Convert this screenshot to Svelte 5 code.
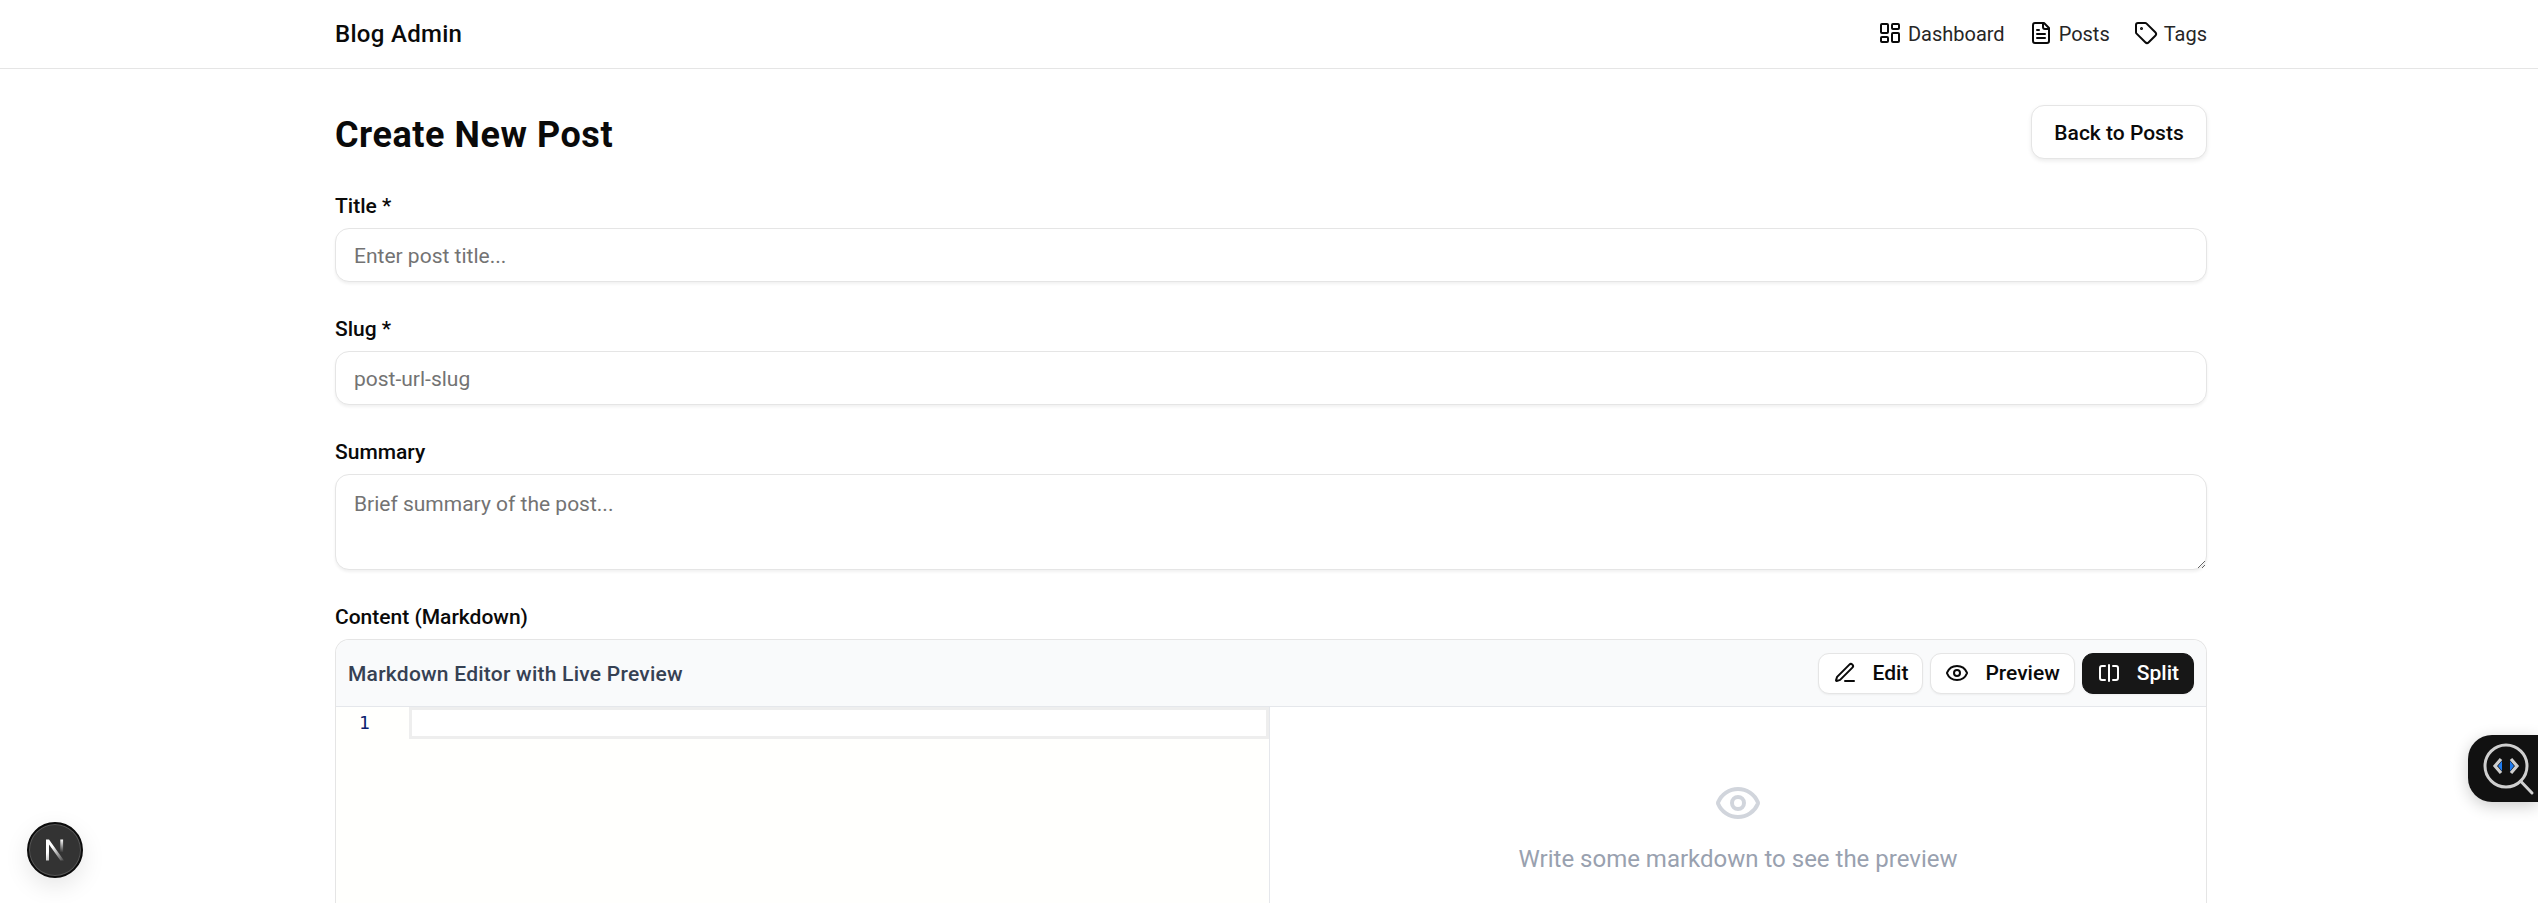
<script>
    let title = $state("");
    let slug = $state("");
    let summary = $state("");
    let mode = $state("split");

    const navLinks = [
        { label: "Dashboard", icon: "dash" },
        { label: "Posts", icon: "file" },
        { label: "Tags", icon: "tag" }
    ];
</script>

<div class="page">
    <header class="topbar">
        <div class="bar-inner">
            <span class="brand">Blog Admin</span>
            <nav class="nav">
                {#each navLinks as link}
                    <span class="nav-link">
                        <svg class="nav-icon" viewBox="0 0 24 24" fill="none" stroke="currentColor" stroke-width="2" stroke-linecap="round" stroke-linejoin="round">
                            {#if link.icon == "dash"}
                                <rect x="3" y="3" width="7" height="9" rx="1"/>
                                <rect x="14" y="3" width="7" height="5" rx="1"/>
                                <rect x="14" y="12" width="7" height="9" rx="1"/>
                                <rect x="3" y="16" width="7" height="5" rx="1"/>
                            {:else if link.icon == "file"}
                                <path d="M15 2H6a2 2 0 0 0-2 2v16a2 2 0 0 0 2 2h12a2 2 0 0 0 2-2V7Z"/>
                                <path d="M14 2v4a2 2 0 0 0 2 2h4"/>
                                <path d="M10 9H8"/>
                                <path d="M16 13H8"/>
                                <path d="M16 17H8"/>
                            {:else}
                                <path d="M12.586 2.586A2 2 0 0 0 11.172 2H4a2 2 0 0 0-2 2v7.172a2 2 0 0 0 .586 1.414l8.704 8.704a2.426 2.426 0 0 0 3.42 0l6.58-6.58a2.426 2.426 0 0 0 0-3.42z"/>
                                <circle cx="7.5" cy="7.5" r=".5" fill="currentColor"/>
                            {/if}
                        </svg>
                        {link.label}
                    </span>
                {/each}
            </nav>
        </div>
    </header>

    <main class="content">
        <div class="title-row">
            <h1>Create New Post</h1>
            <button class="back">Back to Posts</button>
        </div>

        <div class="field">
            <label for="title">Title *</label>
            <input id="title" placeholder="Enter post title..." bind:value={title} />
        </div>
        <div class="field">
            <label for="slug">Slug *</label>
            <input id="slug" placeholder="post-url-slug" bind:value={slug} />
        </div>
        <div class="field">
            <label for="summary">Summary</label>
            <textarea id="summary" placeholder="Brief summary of the post..." bind:value={summary}></textarea>
        </div>
        <div class="field">
            <span class="label">Content (Markdown)</span>
            <div class="editor">
                <div class="editor-head">
                    <span class="editor-title">Markdown Editor with Live Preview</span>
                    <div class="modes">
                        <button class="mode edit" class:active={mode == "edit"} onclick={() => (mode = "edit")}>
                            <svg viewBox="0 0 24 24" fill="none" stroke="currentColor" stroke-width="2" stroke-linecap="round" stroke-linejoin="round">
                                <path d="M12 20h9"/>
                                <path d="M16.376 3.622a1 1 0 0 1 3.002 3.002L7.368 18.635a2 2 0 0 1-.855.506l-2.872.838a.5.5 0 0 1-.62-.62l.838-2.872a2 2 0 0 1 .506-.854z"/>
                            </svg>
                            Edit
                        </button>
                        <button class="mode preview" class:active={mode == "preview"} onclick={() => (mode = "preview")}>
                            <svg viewBox="0 0 24 24" fill="none" stroke="currentColor" stroke-width="2" stroke-linecap="round" stroke-linejoin="round">
                                <path d="M2.062 12.348a1 1 0 0 1 0-.696 10.75 10.75 0 0 1 19.876 0 1 1 0 0 1 0 .696 10.75 10.75 0 0 1-19.876 0"/>
                                <circle cx="12" cy="12" r="3"/>
                            </svg>
                            Preview
                        </button>
                        <button class="mode split" class:active={mode == "split"} onclick={() => (mode = "split")}>
                            <svg viewBox="0 0 24 24" fill="none" stroke="currentColor" stroke-width="2" stroke-linecap="round" stroke-linejoin="round">
                                <path d="M8 19H5c-1 0-2-1-2-2V7c0-1 1-2 2-2h3"/>
                                <path d="M16 5h3c1 0 2 1 2 2v10c0 1-1 2-2 2h-3"/>
                                <line x1="12" x2="12" y1="4" y2="20"/>
                            </svg>
                            Split
                        </button>
                    </div>
                </div>
                <div class="editor-body">
                    <div class="code-pane">
                        <div class="gutter">1</div>
                        <div class="code-area">
                            <div class="current-line"></div>
                        </div>
                    </div>
                    <div class="preview-pane">
                        <svg class="big-eye" viewBox="0 0 24 24" fill="none" stroke="currentColor" stroke-width="2" stroke-linecap="round" stroke-linejoin="round">
                            <path d="M2.062 12.348a1 1 0 0 1 0-.696 10.75 10.75 0 0 1 19.876 0 1 1 0 0 1 0 .696 10.75 10.75 0 0 1-19.876 0"/>
                            <circle cx="12" cy="12" r="3"/>
                        </svg>
                        <p>Write some markdown to see the preview</p>
                    </div>
                </div>
            </div>
        </div>
    </main>

    <button class="dev-badge" aria-label="Next.js dev tools">
        <svg viewBox="0 0 32 32" width="32" height="32">
            <defs>
                <linearGradient id="n-fade" x1="0" y1="0" x2="1" y2="1">
                    <stop offset="0.35" stop-color="#fff"/>
                    <stop offset="1" stop-color="#fff" stop-opacity="0.1"/>
                </linearGradient>
                <linearGradient id="n-bar" x1="0" y1="0" x2="0" y2="1">
                    <stop offset="0" stop-color="#fff"/>
                    <stop offset="1" stop-color="#fff" stop-opacity="0"/>
                </linearGradient>
            </defs>
            <path d="M7 5.5h3L25 26.5h-3.6L10 10.5v16H7z" fill="url(#n-fade)"/>
            <rect x="21.3" y="5.5" width="2.8" height="13" fill="url(#n-bar)"/>
        </svg>
    </button>

    <button class="inspector" aria-label="Inspect code">
        <svg viewBox="0 0 70 67" width="70" height="67" fill="none">
            <circle cx="38" cy="31" r="21" stroke="#cfcfcf" stroke-width="3"/>
            <path d="M52.5 46 L64 58" stroke="#cfcfcf" stroke-width="3" stroke-linecap="round"/>
            <path d="M33 24 L27 31 L33 38" stroke="#cfcfcf" stroke-width="3.2"/>
            <path d="M43 24 L49 31 L43 38" stroke="#cfcfcf" stroke-width="3.2"/>
            <path d="M34 26 L30 31 L34 36 Z" fill="#1e7bf0"/>
            <path d="M42 26 L46 31 L42 36 Z" fill="#1e7bf0"/>
        </svg>
    </button>
</div>

<style>
    :global(body) {
        margin: 0;
        overflow: hidden;
        background: #fff;
    }
    .page {
        height: 903px;
        overflow: hidden;
        position: relative;
        font-family: Roboto, "Noto Sans", sans-serif;
        color: #0a0a0a;
    }
    .topbar {
        height: 68px;
        border-bottom: 1px solid #e5e5e5;
    }
    .bar-inner {
        width: 1872px;
        height: 100%;
        margin-left: 335px;
        display: flex;
        align-items: center;
        justify-content: space-between;
    }
    .brand {
        font-size: 24px;
        font-weight: 500;
        letter-spacing: 0.3px;
    }
    .nav {
        display: flex;
        gap: 24px;
        font-size: 20px;
        color: #262626;
    }
    .nav-link {
        display: flex;
        align-items: center;
        gap: 6px;
    }
    .nav-icon {
        width: 24px;
        height: 24px;
        margin-top: -3px;
        color: #0a0a0a;
    }
    .content {
        width: 1872px;
        margin-left: 335px;
    }
    .title-row {
        display: flex;
        align-items: center;
        justify-content: space-between;
        padding-top: 36px;
        margin-bottom: 32px;
    }
    h1 {
        margin: 0;
        padding-top: 6px;
        font-size: 36px;
        font-weight: 700;
        line-height: 48px;
        letter-spacing: 0.55px;
    }
    .back {
        height: 54px;
        width: 176px;
        padding-top: 2px;
        font: 500 21px Roboto, sans-serif;
        color: #0a0a0a;
        background: #fff;
        border: 1px solid #e5e5e5;
        border-radius: 13px;
        box-shadow: 0 2px 4px rgba(0, 0, 0, 0.08);
    }
    .field {
        display: flex;
        flex-direction: column;
        gap: 7px;
        margin-bottom: 32px;
    }
    label, .label {
        font-size: 21px;
        font-weight: 500;
        line-height: 30px;
    }
    input, textarea {
        box-sizing: border-box;
        width: 100%;
        font: 400 21px Roboto, sans-serif;
        color: #0a0a0a;
        padding: 2px 18px 0;
        background: #fff;
        border: 1px solid #e5e5e5;
        border-radius: 14px;
        box-shadow: 0 2px 3px rgba(0, 0, 0, 0.06);
        outline: none;
    }
    input {
        height: 54px;
    }
    textarea {
        height: 96px;
        padding-top: 17px;
        display: block;
    }
    input::placeholder, textarea::placeholder {
        color: #737373;
    }
    .editor {
        border: 1px solid #e5e5e5;
        border-bottom: none;
        border-radius: 14px 14px 0 0;
        height: 400px;
    }
    .editor-head {
        height: 67px;
        box-sizing: border-box;
        padding: 0 12px;
        display: flex;
        align-items: center;
        justify-content: space-between;
        background: #f9fafb;
        border-bottom: 1px solid #e5e7eb;
        border-radius: 13px 13px 0 0;
    }
    .editor-title {
        padding-top: 2px;
        font-size: 21px;
        font-weight: 500;
        letter-spacing: 0.24px;
        color: #364153;
    }
    .modes {
        display: flex;
        gap: 7px;
    }
    .mode {
        height: 41px;
        display: flex;
        align-items: center;
        gap: 16px;
        padding: 0 14px;
        font: 500 21px Roboto, sans-serif;
        color: #0a0a0a;
        background: #fff;
        border: 1px solid #e5e5e5;
        border-radius: 11px;
        box-shadow: 0 1px 2px rgba(0, 0, 0, 0.05);
    }
    .mode svg {
        width: 24px;
        height: 24px;
    }
    .mode.active {
        background: #171717;
        border-color: #171717;
        color: #fff;
    }
    .editor-body {
        display: grid;
        grid-template-columns: 934px 1fr;
        height: 100%;
    }
    .code-pane {
        display: flex;
        background: #fffffd;
        border-right: 1px solid #e5e7eb;
    }
    .gutter {
        width: 73px;
        font: 400 18px "DejaVu Sans Mono", monospace;
        color: #0b216f;
        line-height: 32px;
        padding-left: 23px;
        box-sizing: border-box;
    }
    .code-area {
        flex: 1;
    }
    .current-line {
        box-sizing: border-box;
        height: 32px;
        border: 3px solid #eeeeee;
        background: #fff;
    }
    .preview-pane {
        display: flex;
        flex-direction: column;
        align-items: center;
        padding-top: 72px;
        color: #99a1af;
    }
    .big-eye {
        width: 48px;
        height: 48px;
        color: #d1d5dc;
    }
    .preview-pane p {
        margin: 14px 0 0;
        font-size: 24px;
        line-height: 36px;
    }
    .dev-badge {
        position: absolute;
        left: 27px;
        bottom: 25px;
        padding: 0;
        width: 56px;
        height: 56px;
        border-radius: 50%;
        background: #333;
        border: 2px solid #0c0c0c;
        box-shadow: 0 0 0 1px #555 inset, 0 8px 24px rgba(0, 0, 0, 0.1);
        display: flex;
        align-items: center;
        justify-content: center;
    }
    .inspector {
        position: absolute;
        right: 0;
        top: 735px;
        width: 70px;
        height: 67px;
        padding: 0;
        background: #111;
        border: none;
        border-radius: 24px 0 0 24px;
        box-shadow: 0 4px 16px rgba(0, 0, 0, 0.2);
    }
</style>
